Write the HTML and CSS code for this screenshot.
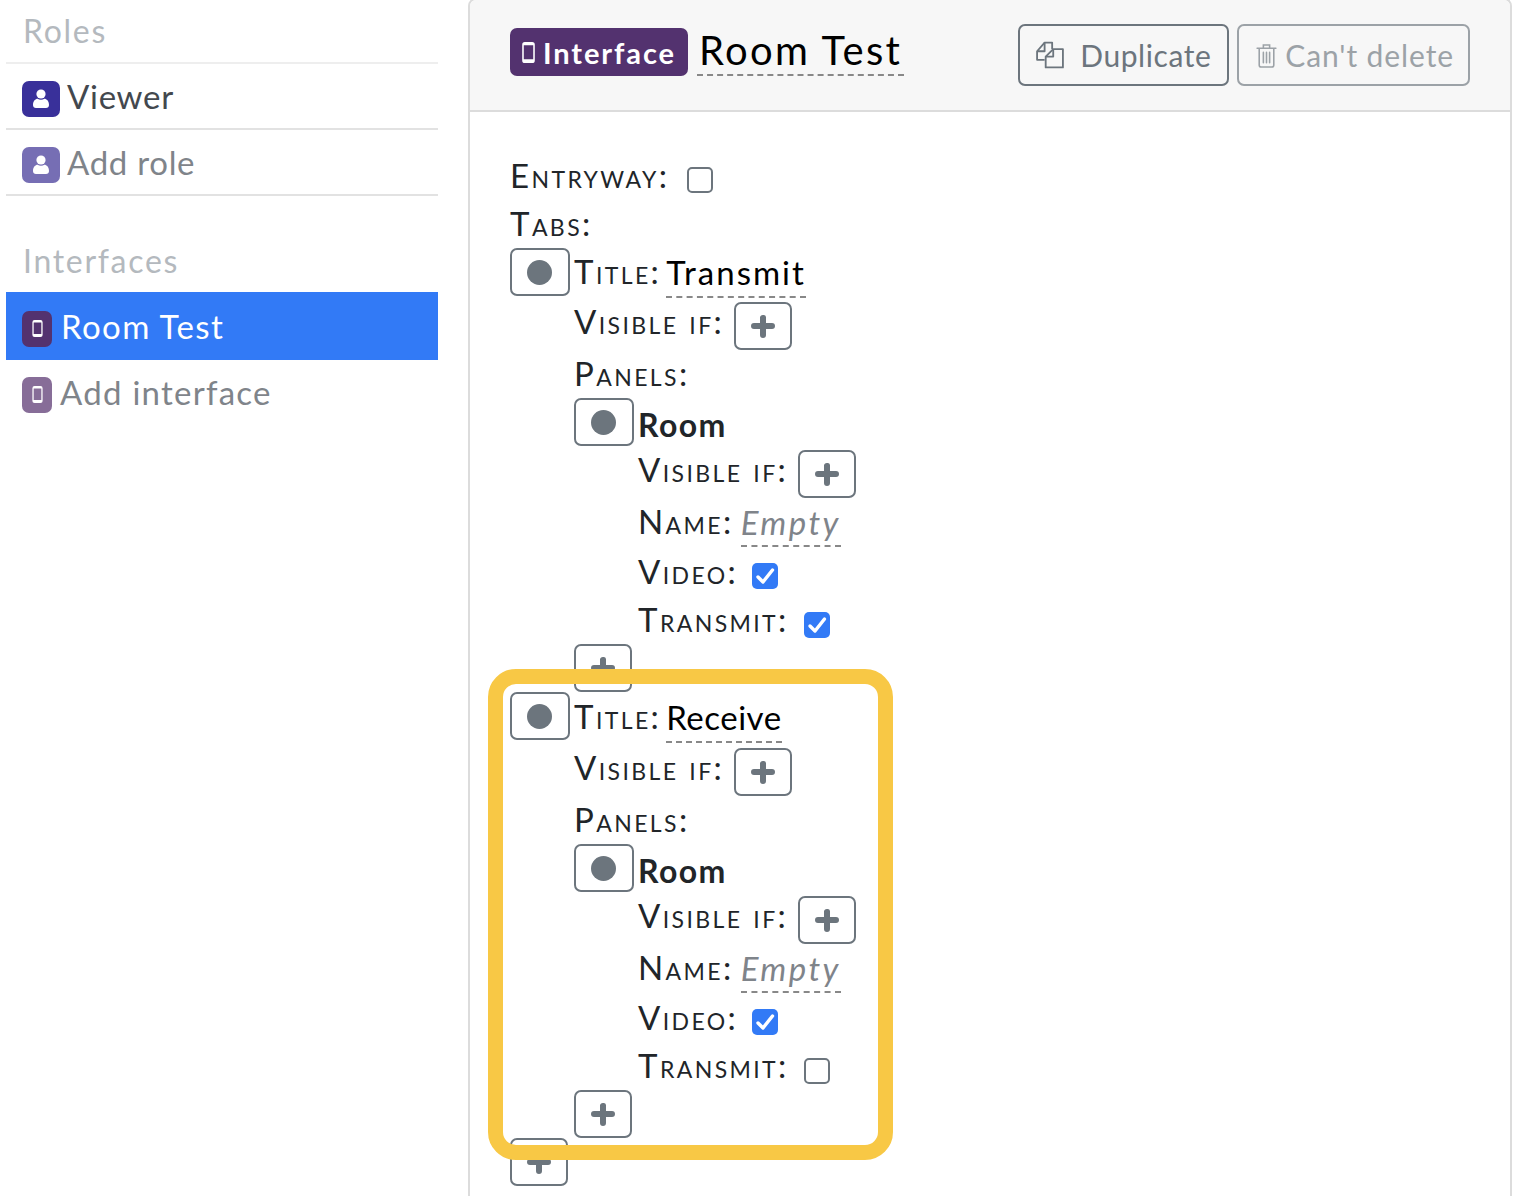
FILE: index.html
```html
<!DOCTYPE html>
<html lang="en">
<head>
<meta charset="utf-8">
<title>Room Test</title>
<link rel="stylesheet" href="styles.css">
</head>
<body>
<svg class="defs" aria-hidden="true">
  <symbol id="i-user" viewBox="0 0 18 20"><circle cx="9" cy="5" r="4.6"/><path d="M1 16c0-4 2.500-6.200 4.600-6.200 1 .6 2.100 1 3.400 1s2.400-.4 3.400-1C14.500 9.800 17 12 17 16c0 2-1.200 3-3 3H4c-1.800 0-3-1-3-3z"/></symbol>
  <symbol id="i-phone" viewBox="0 0 12 20"><path fill-rule="evenodd" d="M2.500 0h7A2.500 2.500 0 0 1 12 2.500v15A2.500 2.500 0 0 1 9.500 20h-7A2.500 2.500 0 0 1 0 17.500v-15A2.500 2.500 0 0 1 2.500 0zM1.500 3v13.500h9V3z"/></symbol>
  <symbol id="i-plus" viewBox="0 0 24 24"><path d="M12 1a2.500 2.500 0 0 1 3 2v6h6a3 3 0 0 1 0 6h-6v6a3 3 0 0 1-6 0v-6H3a3 3 0 0 1 0-6h6V3a3 3 0 0 1 3-2z"/></symbol>
  <symbol id="i-check" viewBox="0 0 26 26"><path d="M6 14l5 5 9.500-12" fill="none" stroke="#fff" stroke-width="3.400" stroke-linecap="round" stroke-linejoin="round"/></symbol>
</svg>

<div class="page">
  <aside class="sidebar">
    <h2 class="side-heading">Roles</h2>
    <a class="side-item"><span class="tile tile-role"><svg class="tile-user"><use href="#i-user"/></svg></span>Viewer</a>
    <a class="side-item side-item-muted"><span class="tile tile-role tile-faded"><svg class="tile-user"><use href="#i-user"/></svg></span>Add role</a>
    <h2 class="side-heading side-heading-second">Interfaces</h2>
    <a class="side-item side-item-active"><span class="tile tile-iface"><svg class="tile-phone"><use href="#i-phone"/></svg></span>Room Test</a>
    <a class="side-item side-item-muted side-item-plain"><span class="tile tile-iface tile-faded"><svg class="tile-phone"><use href="#i-phone"/></svg></span>Add interface</a>
  </aside>

  <main class="panel">
    <header class="panel-head">
      <span class="badge"><svg class="badge-phone"><use href="#i-phone"/></svg>Interface</span>
      <span class="head-title">Room Test</span>
      <span class="head-actions">
        <button class="btn">
          <svg class="btn-icon" viewBox="1 2 26 25" fill="none" stroke="currentColor" stroke-width="1.700" stroke-linejoin="round"><path d="M9 19H2V11L9 3h7v6"/><path d="M9 3v8H2"/><path d="M10 16l7-7h9v17H10z"/><path d="M17 9v7h-7"/></svg>
          Duplicate
        </button>
        <button class="btn btn-disabled">
          <svg class="btn-icon btn-icon-trash" viewBox="0 0 20 24" fill="none" stroke="currentColor" stroke-width="1.500" stroke-linecap="round"><path d="M1 5h18M7 5V2h6v3M3 5v16a2 2 0 0 0 2 2h10a2 2 0 0 0 2-2V5M7 9v10M10 9v10M13 9v10"/></svg>
          Can't delete
        </button>
      </span>
    </header>

    <div class="panel-body">
      <div class="row row-entry"><span class="label">Entryway:</span><span class="check"></span></div>
      <div class="row row-tabs"><span class="label">Tabs:</span></div>

      <section class="tree-item">
        <button class="handle"><span class="dot"></span></button>
        <div class="tree-body">
          <div class="row row-title"><span class="label">Title:</span><span class="field">Transmit</span></div>
          <div class="row row-48"><span class="label label-high">Visible if:</span><button class="add"><svg><use href="#i-plus"/></svg></button></div>
          <div class="row row-48"><span class="label label-low">Panels:</span></div>
          <section class="tree-item">
            <button class="handle"><span class="dot"></span></button>
            <div class="tree-body">
              <div class="row row-room"><strong class="room">Room</strong></div>
              <div class="row row-48"><span class="label label-high">Visible if:</span><button class="add"><svg><use href="#i-plus"/></svg></button></div>
              <div class="row row-name"><span class="label">Name:</span><span class="field field-empty">Empty</span></div>
              <div class="row row-48"><span class="label">Video:</span><span class="check check-on"><svg><use href="#i-check"/></svg></span></div>
              <div class="row row-46"><span class="label">Transmit:</span><span class="check check-on"><svg><use href="#i-check"/></svg></span></div>
            </div>
          </section>
          <button class="add"><svg><use href="#i-plus"/></svg></button>
        </div>
      </section>

      <section class="tree-item">
        <button class="handle"><span class="dot"></span></button>
        <div class="tree-body">
          <div class="row row-title row-title-tall"><span class="label">Title:</span><span class="field field-tight">Receive</span></div>
          <div class="row row-48"><span class="label label-high">Visible if:</span><button class="add"><svg><use href="#i-plus"/></svg></button></div>
          <div class="row row-48"><span class="label label-low">Panels:</span></div>
          <section class="tree-item">
            <button class="handle"><span class="dot"></span></button>
            <div class="tree-body">
              <div class="row row-room"><strong class="room">Room</strong></div>
              <div class="row row-48"><span class="label label-high">Visible if:</span><button class="add"><svg><use href="#i-plus"/></svg></button></div>
              <div class="row row-name"><span class="label">Name:</span><span class="field field-empty">Empty</span></div>
              <div class="row row-48"><span class="label">Video:</span><span class="check check-on"><svg><use href="#i-check"/></svg></span></div>
              <div class="row row-46"><span class="label">Transmit:</span><span class="check"></span></div>
            </div>
          </section>
          <button class="add"><svg><use href="#i-plus"/></svg></button>
        </div>
      </section>
      <button class="add"><svg><use href="#i-plus"/></svg></button>
    </div>
  </main>
</div>
<div class="highlight"></div>
</body>
</html>
```
FILE: styles.css
```css
* { box-sizing: border-box; }
html, body { margin: 0; height: 1196px; overflow: hidden; background: #fff; }
body { font-family: Lato, "Open Sans", sans-serif; color: #212529; font-size: 32px; position: relative; }
.defs { position: absolute; width: 0; height: 0; }

.page { display: flex; align-items: flex-start; padding-left: 6px; }

.sidebar { width: 432px; flex: none; margin-right: 30px; }
.side-heading { margin: 0; height: 64px; padding: 12px 0 0 17px; font-size: 32px; line-height: 38px; font-weight: 400; color: #b4b9be; letter-spacing: 1.700px; border-bottom: 2px solid #eee; }
.side-heading-second { height: 96px; padding-top: 46px; border-bottom: 0; }
.side-item { display: flex; align-items: center; height: 66px; padding-left: 16px; gap: 7px; color: #43484e; letter-spacing: .7px; border-bottom: 2px solid #e2e2e2; font-size: 33px; }
.side-item-muted { color: #7f848a; }
.side-item-active { height: 68px; background: #327af6; color: #fff; border-bottom: 0; gap: 9px; letter-spacing: 1.400px; }
.side-item-plain { border-bottom: 0; gap: 8px; height: 64px; letter-spacing: 1.250px; }

.tile { display: flex; align-items: center; justify-content: center; height: 36px; margin-top: 5px; border-radius: 7px; flex: none; fill: #fff; }
.tile-role { width: 38px; background: #39309a; }
.tile-iface { width: 30px; background: #53326f; }
.tile-faded.tile-role { background: #766eb4; }
.tile-faded.tile-iface { background: #876d98; }
.tile-user { width: 18px; height: 20px; }
.tile-phone { width: 11px; height: 17px; }

.panel { width: 1044px; flex: none; height: 1200px; margin-top: -2px; border: 2px solid #dcdcdc; border-bottom: 0; border-radius: 8px 8px 0 0; }
.panel-head { display: flex; align-items: center; height: 112px; padding: 0 40px; background: #f7f7f7; border-bottom: 2px solid #dcdcdc; border-radius: 6px 6px 0 0; }
.badge { display: flex; align-items: center; height: 48px; margin-top: -6px; padding: 0 12px; gap: 8px; background: #53326f; color: #fff; border-radius: 7px; font-size: 29px; font-weight: 700; fill: #fff; letter-spacing: 1.900px; }
.badge-phone { width: 13px; height: 21px; }
.head-title { margin: -8px 0 0 9px; padding: 0 2px; height: 50px; line-height: 48px; font-size: 40px; color: #000; letter-spacing: 2.300px; border-bottom: 2px dashed #888; }
.head-actions { margin-left: auto; display: flex; gap: 8px; }
.btn { display: flex; align-items: center; gap: 16px; height: 62px; padding: 0 16px; background: transparent; border: 2px solid #6c757d; border-radius: 7px; color: #6c757d; font: inherit; font-size: 30px; letter-spacing: .55px; white-space: nowrap; }
.btn-disabled { opacity: .65; gap: 8px; padding: 0 14px 0 17px; letter-spacing: .9px; }
.btn-icon { width: 28px; height: 28px; flex: none; }
.btn-icon-trash { width: 21px; height: 25px; }

.panel-body { padding: 38px 40px 0; }
.row { display: flex; align-items: center; }
.row-entry { height: 56px; }
.row-tabs { height: 40px; margin-bottom: 2px; }
.row-title { height: 54px; }
.row-title-tall { height: 56px; }
.row-48 { height: 48px; }
.row-46 { height: 46px; }
.row-room { height: 52px; }
.row-name { height: 52px; }

.label { font-variant: small-caps; font-size: 33px; letter-spacing: 2.400px; margin: 0 7px 6px 0; white-space: nowrap; }
.label-high { margin-bottom: 10px; }
.label-low { margin-bottom: 2px; }
.row-title .label { margin: 0 5px 8px 0; }
.row-46 .label { margin-bottom: 4px; }
.row-entry .label { margin-right: 11px; }
.row .add { margin-left: 3px; }

.tree-item { display: flex; align-items: flex-start; }
.tree-body { display: flex; flex-direction: column; align-items: flex-start; margin-left: 4px; }

.handle { width: 60px; height: 48px; flex: none; display: flex; align-items: center; justify-content: center; padding: 0 2px 0 0; background: #fff; border: 2px solid #6c757d; border-radius: 7px; }
.dot { width: 25px; height: 25px; border-radius: 50%; background: #6c757d; }

.add { width: 58px; height: 48px; flex: none; display: flex; align-items: center; justify-content: center; padding: 0; background: #fff; border: 2px solid #6c757d; border-radius: 7px; fill: #6c757d; }
.add svg { width: 24px; height: 24px; }

.field { height: 46px; line-height: 40px; color: #000; font-size: 33px; letter-spacing: 2px; border-bottom: 2px dashed #888; white-space: nowrap; }
.field-tight { letter-spacing: .5px; }
.field-empty { font-style: italic; color: #7f848a; line-height: 42px; letter-spacing: 2.400px; }

.room { font-weight: 700; font-size: 32px; letter-spacing: 1.400px; }

.check { display: block; width: 26px; height: 26px; margin: 4px 0 0 7px; flex: none; border: 2px solid #6c757d; border-radius: 5px; background: #fff; }
.row-46 .check { margin: 8px 0 0 8px; }
.check-on { background: #327af6; border: 0; }
.check svg { display: block; width: 26px; height: 26px; }

.highlight { position: absolute; left: 488px; top: 669px; width: 405px; height: 491px; border: 15px solid #f8c845; border-radius: 28px; pointer-events: none; }
```
